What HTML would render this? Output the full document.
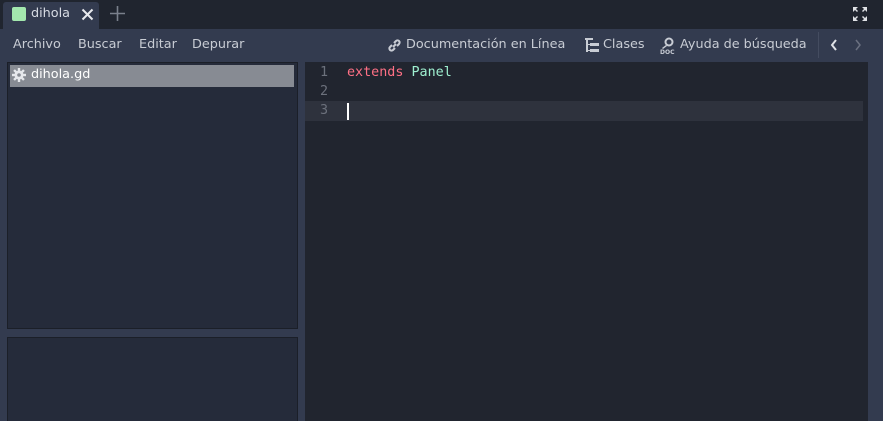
<!DOCTYPE html>
<html><head><meta charset="utf-8"><style>
*{margin:0;padding:0;box-sizing:border-box}
html,body{width:883px;height:421px;overflow:hidden}
body{background:#333b4f;font-family:"DejaVu Sans","Liberation Sans",sans-serif;font-size:12.8px;color:#d0d4dc;position:relative}
.abs{position:absolute}
.top{left:0;top:0;width:883px;height:29px;background:#20252f}
.tab{left:3px;top:2px;width:96px;height:27px;background:#333b4f;border-radius:3px 3px 0 0}
.menu span{position:absolute;top:37px;color:#c8ccd4}
.panel{background:#252b3a;border:1px solid #1b1f28}
.code{left:305px;top:62px;width:563px;height:359px;background:#21252f}
.mono{font-family:"DejaVu Sans Mono","Liberation Mono",monospace;font-size:13.4px}
</style></head><body>
<div class="abs top"></div>
<div class="abs tab"></div>
<div class="abs" style="left:12px;top:7px;width:14px;height:14px;background:#a3e8ae;border-radius:2px"></div>
<div class="abs" style="left:31px;top:6px;color:#d8dce4">dihola</div>
<svg class="abs" style="left:81px;top:8px" width="13" height="13"><path d="M1.5 1.5L11.5 11.5M11.5 1.5L1.5 11.5" stroke="#e8eaee" stroke-width="2"/></svg>
<svg class="abs" style="left:110px;top:6px" width="15" height="15"><path d="M7.5 0V15M0 7.5H15" stroke="#7a808c" stroke-width="1.6"/></svg>
<svg class="abs" style="left:853px;top:7px" width="14" height="14" fill="#e0e2e6"><path d="M0 0h5l-2 2 2 2-1 1-2-2-2 2zM14 0v5l-2-2-2 2-1-1 2-2-2-2zM0 14v-5l2 2 2-2 1 1-2 2 2 2zM14 14h-5l2-2-2-2 1-1 2 2 2-2z"/></svg>
<div class="menu"><span style="left:13px">Archivo</span><span style="left:78px">Buscar</span><span style="left:139px">Editar</span><span style="left:192px">Depurar</span>
<span style="left:406px">Documentación en Línea</span><span style="left:603px">Clases</span><span style="left:680px">Ayuda de búsqueda</span></div>
<svg class="abs" style="left:387px;top:38px" width="15" height="15" fill="none" stroke="#c8ccd4" stroke-width="2"><path d="M6 9L9 6M5 7L3 9a2 2 0 0 0 3 3l2-2M10 8l2-2a2 2 0 0 0-3-3L7 5"/></svg>
<svg class="abs" style="left:585px;top:38px" width="15" height="14" fill="#c8ccd4"><rect x="0" y="0" width="8" height="2"/><rect x="1" y="0" width="2" height="14"/><rect x="5" y="5" width="9" height="3"/><rect x="5" y="11" width="9" height="3"/><rect x="3" y="6" width="2" height="1"/><rect x="3" y="12" width="2" height="1"/></svg>
<svg class="abs" style="left:660px;top:37px" width="16" height="17" fill="#c8ccd4"><circle cx="9" cy="5" r="3.5" fill="none" stroke="#c8ccd4" stroke-width="2"/><path d="M6 8L2 11l1 1 4-3z"/><text x="0" y="17" font-size="6" font-weight="bold" font-family="DejaVu Sans">DOC</text></svg>
<div class="abs" style="left:818px;top:32px;width:1px;height:26px;background:#444c60"></div>
<svg class="abs" style="left:830px;top:39px" width="8" height="12" fill="none" stroke="#e0e2e6" stroke-width="2"><path d="M6 1L2 6l4 5"/></svg>
<svg class="abs" style="left:854px;top:39px" width="8" height="12" fill="none" stroke="#6a7080" stroke-width="1.5"><path d="M2 1l4 5-4 5"/></svg>
<div class="abs panel" style="left:7px;top:62px;width:291px;height:267px"></div>
<div class="abs" style="left:10px;top:65px;width:284px;height:22px;background:#878b93"></div>
<svg class="abs" style="left:12px;top:68px" width="14" height="14"><g fill="#e6e8ec"><circle cx="7" cy="7" r="4.5"/><rect x="5.8" y="0" width="2.4" height="14"/><rect x="0" y="5.8" width="14" height="2.4"/><rect x="5.8" y="0" width="2.4" height="14" transform="rotate(45 7 7)"/><rect x="5.8" y="0" width="2.4" height="14" transform="rotate(-45 7 7)"/></g><circle cx="7" cy="7" r="1.8" fill="#878b93"/></svg>
<div class="abs" style="left:31px;top:67px;color:#fff">dihola.gd</div>
<div class="abs panel" style="left:7px;top:337px;width:291px;height:90px"></div>
<div class="abs code"></div>
<div class="abs" style="left:305px;top:101px;width:558px;height:20px;background:#2e323d"></div>
<div class="abs mono" style="left:320px;top:63px;color:#6c717c;line-height:19px">1<br>2<br>3</div>
<div class="abs mono" style="left:347px;top:63px;line-height:19px"><span style="color:#ff7085">extends</span> <span style="color:#9ef0d0">Panel</span></div>
<div class="abs" style="left:347px;top:103px;width:1.5px;height:17px;background:#fff"></div>
</body></html>
